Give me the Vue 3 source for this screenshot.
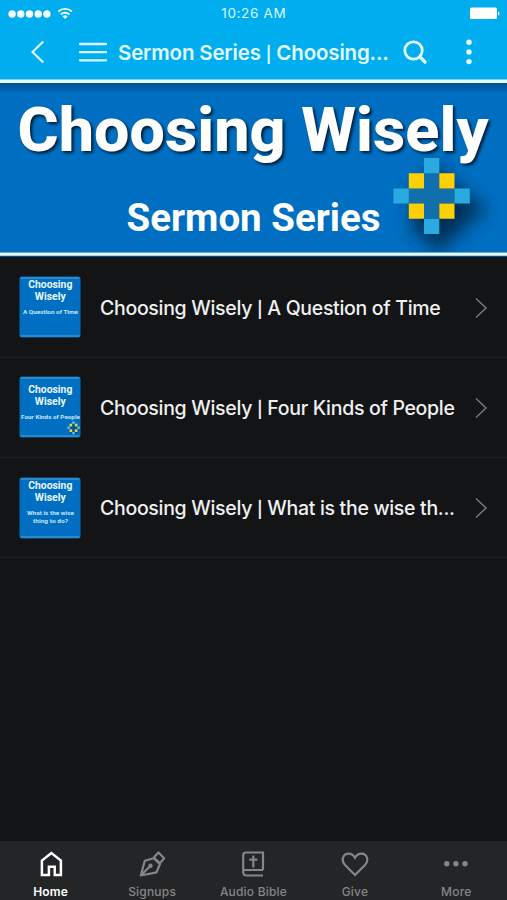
<script setup>
const rows = [
  { id: 1, series: 'Choosing Wisely', title: 'A Question of Time', top: 12, lines: ['A Question of Time'], widths: [55] },
  { id: 2, series: 'Choosing Wisely', title: 'Four Kinds of People', top: 16.500, lines: ['Four Kinds of People'], widths: [59], mark: true },
  { id: 3, series: 'Choosing Wisely', title: 'What is the wise th...', top: 12, lines: ['What is the wise', 'thing to do?'], widths: [47, 35] }
]
const tabs = [
  { name: 'Home', icon: 'home' },
  { name: 'Signups', icon: 'pen' },
  { name: 'Audio Bible', icon: 'book' },
  { name: 'Give', icon: 'heart' },
  { name: 'More', icon: 'more' }
]
</script>

<template>
  <div class="screen">
    <header>
      <div class="status">
        <svg class="signal" width="66" height="14" viewBox="0 0 66 14">
          <circle v-for="n in 5" :key="n" :cx="3.1 + (n - 1) * 8.7" cy="7" r="3.7" fill="#f4ffff" />
          <g fill="none" stroke="#e8fdff" stroke-width="1.9">
            <path d="M49.300 4.500a10 10 0 0 1 13.600 0" />
            <path d="M51.800 7.500a6.300 6.300 0 0 1 8.600 0" />
          </g>
          <path d="M53.600 9.400a3.700 3.700 0 0 1 5 0L56.100 12z" fill="#e8fdff" />
        </svg>
        <span class="time">10:26 AM</span>
        <svg class="battery" width="31" height="13" viewBox="0 0 31 13">
          <rect x="0" y=".500" width="27" height="11.500" rx="1.500" fill="#fff" />
          <path d="M28 4.500c2 .500 2 3.500 0 4z" fill="#e8fdff" />
        </svg>
      </div>
      <nav>
        <svg class="back" width="14" height="24" viewBox="0 0 14 24"><path d="M12.300 1.500 1.500 12l10.800 10.500" fill="none" stroke="#e0fbff" stroke-width="2.200" /></svg>
        <svg class="menu" width="28" height="20" viewBox="0 0 28 20"><path d="M1 2h26M1 10.200h26M1 18.300h26" stroke="#d8faff" stroke-width="2.300" stroke-linecap="round" /></svg>
        <h1>Sermon Series <i>|</i> Choosing...</h1>
        <svg class="search" width="24" height="24" viewBox="0 0 24 24"><circle cx="10.500" cy="10.500" r="8.700" fill="none" stroke="#e4fcff" stroke-width="2.800" /><path d="m17 17 5 5" stroke="#e4fcff" stroke-width="3.200" stroke-linecap="round" /></svg>
        <svg class="dots" width="6" height="26" viewBox="0 0 6 26"><g fill="#e4fcff"><circle cx="3" cy="3.300" r="2.700" /><circle cx="3" cy="13" r="2.700" /><circle cx="3" cy="22.600" r="2.700" /></g></svg>
      </nav>
    </header>

    <svg class="banner" width="507" height="178" viewBox="0 79 507 178">
      <defs>
        <linearGradient id="shade" x1="0" y1="0" x2="0" y2="1"><stop offset="0" stop-color="#00569d" /><stop offset=".45" stop-color="#0059a1" /><stop offset="1" stop-color="#006fc1" /></linearGradient>
        <filter id="soft" x="-50%" y="-50%" width="200%" height="200%"><feGaussianBlur stdDeviation="9" /></filter>
        <clipPath id="panel"><path d="M0 83h507v169H0z" /></clipPath>
      </defs>
      <path d="M0 79h507v178H0z" fill="#004f87" />
      <path d="M0 79h507v1H0z" fill="#08a4e5" />
      <path d="M0 79.500h507v3.600H0z" fill="#e1fbff" />
      <path d="M0 84h507v168H0z" fill="#006fc1" />
      <path d="M0 83.500h507v9H0z" fill="url(#shade)" />
      <path d="M0 252.500h507v3.200H0z" fill="#e1fbff" />
      <g clip-path="url(#panel)"><path d="M430 168h17v17h17v15h18v19h-18v17h-17v15h-17v-15h-17v-51h17z" fill="#002d55" filter="url(#soft)" /></g>
      <text class="big" x="17.500" y="150.500" textLength="471" lengthAdjust="spacingAndGlyphs">Choosing Wisely</text>
      <text class="sub" x="126.500" y="231" textLength="254" lengthAdjust="spacingAndGlyphs">Sermon Series</text>
      <path d="M424 173.200h15.300v15.200h15.300v15.200h-15.300v15.200H424v-15.200h-15.300v-15.200H424z" fill="#126fae" />
      <path d="M424 158h15.300v15.200H424zM393.500 188.400h15.300v15.200h-15.300zM454.500 188.400h15.300v15.200h-15.300zM424 218.800h15.300V234H424z" fill="#29abe2" />
      <path d="M408.800 173.200H424v15.200h-15.200zM439.300 173.200h15.200v15.200h-15.200zM408.800 203.600H424v15.200h-15.200zM439.300 203.600h15.200v15.200h-15.200z" fill="#ffd000" />
    </svg>

    <main>
      <div v-for="row in rows" :key="row.id" class="row">
        <svg class="thumb" width="62" height="62" viewBox="0 0 62 62">
          <rect x=".500" y=".500" width="61" height="61" rx="2.500" fill="#006fc1" />
          <path d="M1.500 2h59M1.500 60h59" stroke="#58a5d8" stroke-width="1" />
          <text class="mini" x="31.300" :y="row.top" textLength="44" lengthAdjust="spacingAndGlyphs">Choosing</text>
          <text class="mini" x="31.300" :y="row.top + 12" textLength="31" lengthAdjust="spacingAndGlyphs">Wisely</text>
          <text v-for="(line, i) in row.lines" :key="line" class="tiny" x="31.500" :y="row.top + 26 + i * 8" :textLength="row.widths[i]" lengthAdjust="spacingAndGlyphs">{{ line }}</text>
          <g v-if="row.mark">
            <circle cx="55" cy="53" r="5.500" fill="#06538d" />
            <path d="M53.300 45.500h2.400v2.200h-2.400zM48.500 50.600h2.200V53h-2.200zM58.500 50.600h2.200V53h-2.200zM53.300 56h2.400v2.300h-2.400z" fill="#63cbe8" />
            <path d="M50.500 47.700h2.700v2.700h-2.700zM55.800 47.700h2.700v2.700h-2.700zM50.500 53.200h2.700v2.700h-2.700zM55.800 53.200h2.700v2.700h-2.700z" fill="#dfd84f" />
          </g>
        </svg>
        <span class="title">{{ row.series }} <i>|</i> {{ row.title }}</span>
        <svg class="chevron" width="14" height="22" viewBox="0 0 14 22"><path d="m2 1.500 10 9.500L2 20.500" fill="none" stroke="#77797a" stroke-width="1.500" /></svg>
      </div>
    </main>

    <footer>
      <div v-for="(tab, i) in tabs" :key="tab.name" class="tab" :class="{ active: i === 0 }">
        <svg width="28" height="28" viewBox="0 0 28 28" fill="none" stroke="currentColor" stroke-width="2.200">
          <path v-if="tab.icon === 'home'" d="M4.900 25.100V10.600L14.400 3l9.500 7.600v14.500h-6.200v-8.300h-5.800v8.300z" stroke-width="2.500" />
          <g v-else-if="tab.icon === 'pen'" stroke-linejoin="round">
            <path d="m2.800 25.500 4-14.800 9-2.500 6.100 6.100-3.400 8zM2.800 25.500l9.200-9.200" />
            <path d="m20.400 2.500 5.800 5.800-4.300 5-6.100-5.800z" />
            <circle cx="12.500" cy="15.800" r="2.200" fill="currentColor" stroke="none" />
          </g>
          <g v-else-if="tab.icon === 'book'">
            <path d="M24 20V2.500H7A2.800 2.800 0 0 0 4.200 5.300V22A3.200 3.200 0 0 0 7.400 25.500H24M4.500 20H24" />
            <path d="M14.300 5.500v12M10.300 9.600h8" />
          </g>
          <path v-else-if="tab.icon === 'heart'" d="M14 25 4.200 15.200C-.500 10.300 2 3.600 7.600 3.600c2.900 0 5.100 1.700 6.400 4.100 1.300-2.400 3.500-4.100 6.400-4.100 5.600 0 8.100 6.700 3.400 11.600z" />
          <g v-else fill="currentColor" stroke="none"><circle cx="4.800" cy="13.800" r="2.700" /><circle cx="13.900" cy="13.800" r="2.700" /><circle cx="23" cy="13.800" r="2.700" /></g>
        </svg>
        <span>{{ tab.name }}</span>
      </div>
    </footer>
  </div>
</template>

<style>
body { margin: 0; background: #121416; }
</style>

<style scoped>
.screen { width: 507px; height: 900px; display: flex; flex-direction: column; overflow: hidden; background: #121416; font-family: Inter, "Liberation Sans", sans-serif; }
header { height: 79px; flex: none; background: #00adef; color: #e0fbff; }
.status { height: 27px; display: grid; grid-template-columns: 1fr auto 1fr; align-items: center; padding: 0 8px 0 8.500px; box-sizing: border-box; }
.time { font-size: 13.500px; letter-spacing: .650px; line-height: 27px; color: #d8f7ff; }
.battery { justify-self: end; margin-right: -2px; }
nav { height: 50px; display: flex; align-items: center; padding-left: 31px; }
svg { display: block; flex: none; }
.signal { overflow: visible; }
.menu { margin-left: 34px; }
h1 { width: 270px; margin: 2px 0 0 11px; font-size: 20.500px; line-height: 50px; font-weight: 600; letter-spacing: -.170px; white-space: nowrap; }
i { display: inline-block; font-style: normal; font-weight: 600; font-size: 16px; line-height: 16px; }
.search { margin-left: 15px; }
.dots { margin-left: 39px; }
.banner { font-family: Roboto, sans-serif; font-weight: 700; fill: #fff; }
.big { font-size: 61.500px; font-weight: 800; filter: drop-shadow(2px 2px 1.500px #001b35); }
.sub { font-size: 38.500px; }
main { flex: 1; padding-top: .500px; }
.row { height: 100.300px; box-sizing: border-box; display: flex; align-items: center; padding: 0 19px 0 18.500px; border-bottom: 1px solid #1e2022; }
.title { flex: none; width: 358px; margin: 1px 0 0 19.500px; font-size: 19.500px; line-height: 30px; letter-spacing: -.310px; font-weight: 450; color: #f0f0f1; white-space: nowrap; }
.chevron { margin: 1px 0 0 16px; }
.thumb { font-family: Roboto, sans-serif; }
.mini { font-size: 10px; font-weight: 700; fill: #e9f7ff; text-anchor: middle; }
.tiny { font-size: 6px; font-weight: 700; fill: #c4e5fa; text-anchor: middle; }
footer { height: 59.500px; flex: none; display: grid; grid-template-columns: repeat(5, 1fr); background: #232527; }
.tab { display: flex; flex-direction: column; align-items: center; padding-top: 9px; color: #858688; }
.tab span { font-size: 12px; line-height: 16px; margin-top: 6.500px; letter-spacing: .200px; font-weight: 500; }
.tab.active { color: #fff; }
.tab.active span { font-weight: 600; }
</style>
